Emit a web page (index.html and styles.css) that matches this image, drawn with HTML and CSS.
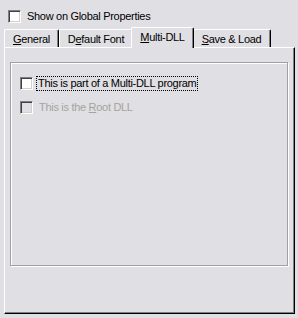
FILE: index.html
```html
<!DOCTYPE html>
<html>
<head>
<meta charset="utf-8">
<link rel="stylesheet" href="styles.css">
</head>
<body>
<div class="dlg">
  <div class="toprow">
    <span class="cb"></span>
    <span class="lbl">Show on Global Properties</span>
  </div>
  <div class="tabs">
    <div class="tab t1"><u>G</u>eneral</div>
    <div class="tab t2">D<u>e</u>fault Font</div>
    <div class="tab sel"><u>M</u>ulti-DLL</div>
    <div class="tab t4"><u>S</u>ave &amp; Load</div>
  </div>
  <div class="panel">
    <div class="group">
      <div class="row">
        <span class="cb"></span>
        <span class="lbl focus">This is part of a Multi-DLL program</span>
      </div>
      <div class="row dis">
        <span class="cb"></span>
        <span class="lbl">This is the <u>R</u>oot DLL</span>
      </div>
    </div>
  </div>
</div>
</body>
</html>
```

FILE: styles.css
```css
html, body {
  margin: 0;
  padding: 0;
  background: #e0dfe3;
}
body {
  width: 298px;
  height: 318px;
  font-family: "Liberation Sans", Arial, sans-serif;
  font-size: 11px;
  letter-spacing: -0.3px;
  color: #000;
  overflow: hidden;
}
.dlg {
  display: flex;
  flex-direction: column;
  height: 318px;
}
.toprow {
  display: flex;
  align-items: center;
  padding: 10px 0 0 8px;
  height: 13px;
}
.cb {
  box-sizing: border-box;
  width: 13px;
  height: 13px;
  flex: none;
  background: #fff;
  border-top: 1px solid #808080;
  border-left: 1px solid #808080;
  border-right: 1px solid #fff;
  border-bottom: 1px solid #fff;
  box-shadow: inset 1px 1px 0 #404040, inset -1px -1px 0 #d4d0c8;
}
.lbl {
  margin-left: 6px;
  line-height: 13px;
  white-space: nowrap;
}
.tabs {
  display: flex;
  align-items: flex-end;
  margin-top: 4px;
  padding-left: 4px;
  height: 20px;
  position: relative;
  z-index: 1;
}
.tab {
  box-sizing: border-box;
  height: 18px;
  padding-top: 2px;
  line-height: 14px;
  text-align: center;
  border-top: 1px solid #fff;
  border-left: 1px solid #fff;
  border-right: 1px solid #000;
  box-shadow: inset -1px 0 0 #808080;
  border-radius: 2px 2px 0 0;
  white-space: nowrap;
  background: #e0dfe3;
}
.t1 { width: 55px; }
.t2 { width: 74px; }
.t4 { width: 79px; }
.tab.sel {
  width: 63px;
  height: 21px;
  margin: 0 -2px -1px -2px;
  padding-top: 2px;
  position: relative;
  z-index: 2;
}
.panel {
  flex: 1;
  margin: 0 3px 4px 4px;
  border-top: 1px solid #fff;
  border-left: 1px solid #fff;
  border-right: 1px solid #000;
  border-bottom: 1px solid #000;
  box-shadow: inset -1px -1px 0 #808080;
  padding: 14px 6px 47px 5px;
  display: flex;
}
.group {
  flex: 1;
  border: 1px solid #a0a0a0;
  box-shadow: inset 1px 1px 0 #fff, 1px 1px 0 #fff;
  padding: 14px 0 0 9px;
  display: flex;
  flex-direction: column;
  gap: 11px;
}
.row {
  display: flex;
  align-items: center;
  height: 13px;
}
.focus {
  outline: 1px dotted #000;
  outline-offset: 0;
  padding: 0 1px;
  margin-left: 4px;
}
.dis .cb {
  background: #e0dfe3;
}
.dis .lbl {
  color: #a4a49c;
}
```
